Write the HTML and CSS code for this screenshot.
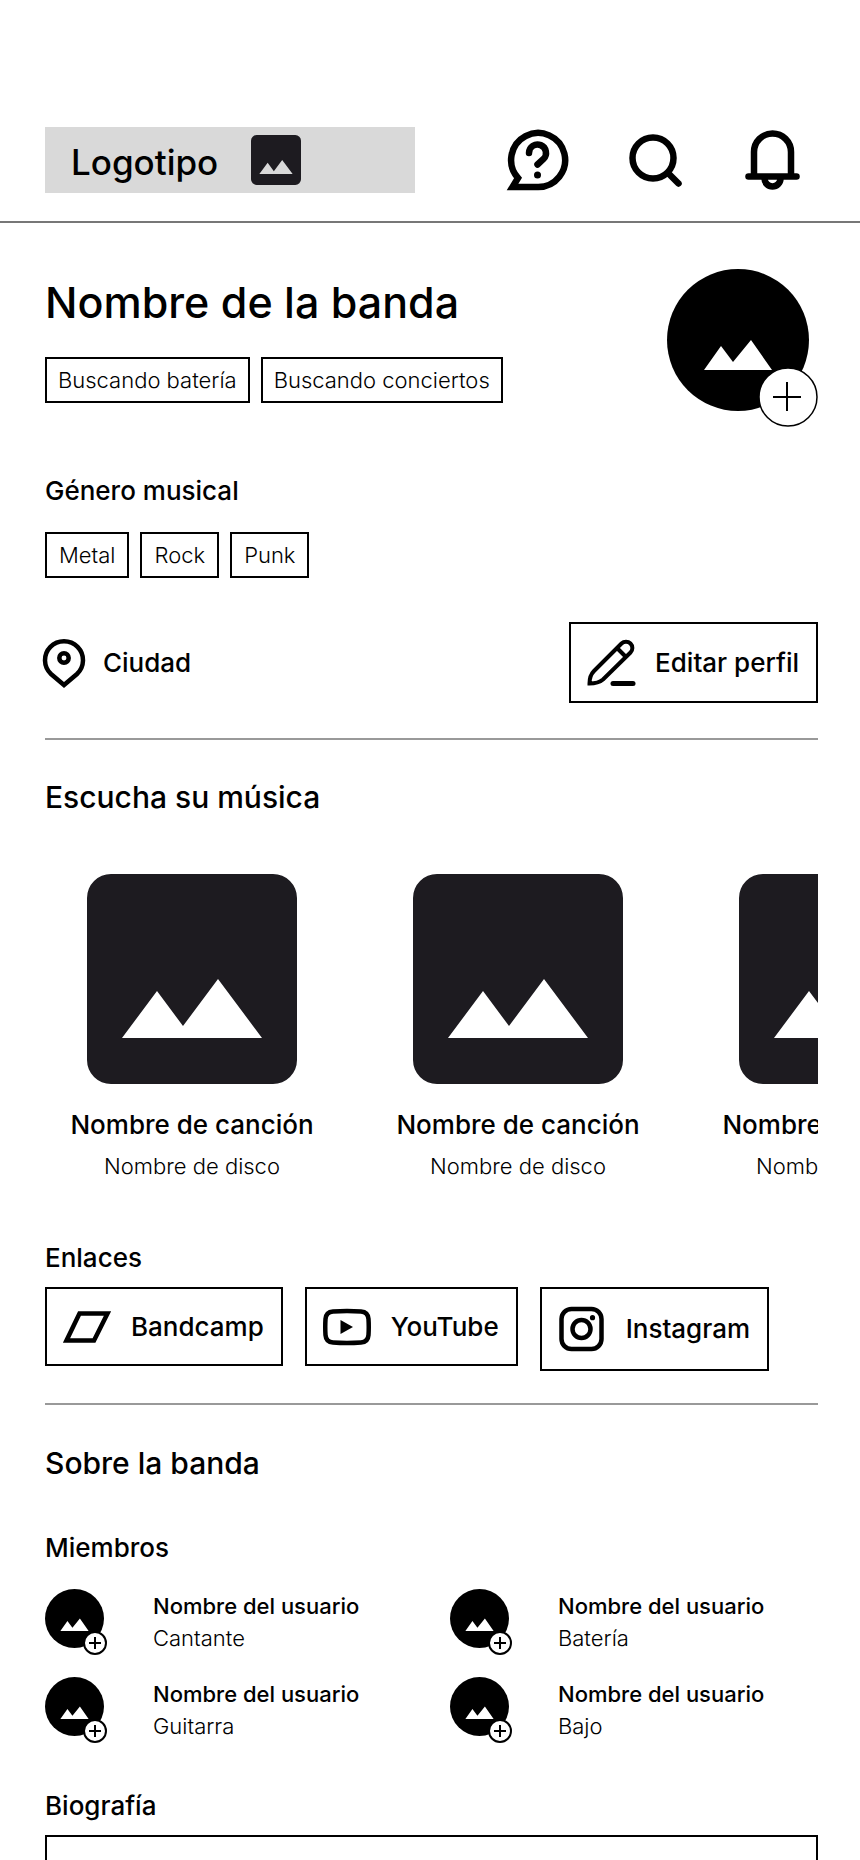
FILE: index.html
```html
<!DOCTYPE html>
<html lang="es">
<head>
    <meta charset="UTF-8">
    <meta name="viewport" content="width=device-width, initial-scale=1.0">
    <title>Nombre de la banda</title>
    <link rel="stylesheet" href="styles.css">
</head>
<body>
    <!-- Dibujos que se repiten -->
    <svg class="sprite" aria-hidden="true">
        <symbol id="cover" viewBox="0 0 210 210">
            <path fill-rule="evenodd" d="M24 0H186A24 24 0 0 1 210 24V186A24 24 0 0 1 186 210H24A24 24 0 0 1 0 186V24A24 24 0 0 1 24 0ZM35 164H175L131 105L96 152L70 117Z"/>
        </symbol>
        <symbol id="photo" viewBox="0 0 142 142">
            <circle cx="71" cy="71" r="71"/>
            <path fill="#fff" d="M37 101H105L84 71L66 93L54 77Z"/>
        </symbol>
    </svg>

    <header class="header">
        <a class="logo" href="#">
            <span>Logotipo</span>
            <svg class="logo-image"><use href="#cover"/></svg>
        </a>
        <nav class="header-actions">
            <button class="icon-button" aria-label="Ayuda">
                <svg viewBox="0 0 66 66" fill="none" stroke="#000" stroke-width="6.500">
                    <path d="M34 60A27 27 0 1 0 14 51L8.500 60Z"/>
                    <path stroke-linecap="round" d="M25 26a8.500 8.500 0 1 1 14.500 6l-6 5.500"/>
                    <circle cx="33.500" cy="48" r="3.500" fill="#000" stroke="none"/>
                </svg>
            </button>
            <button class="icon-button" aria-label="Buscar">
                <svg viewBox="0 0 66 66" fill="none" stroke="#000" stroke-width="6.500">
                    <circle cx="31" cy="31" r="20.500"/>
                    <path stroke-linecap="round" d="M46 46L56.500 56.500"/>
                </svg>
            </button>
            <button class="icon-button" aria-label="Notificaciones">
                <svg viewBox="0 0 66 66" fill="none" stroke="#000" stroke-width="6.500">
                    <path d="M14 49V25a18.500 18.500 0 0 1 37 0V49"/>
                    <path stroke-linecap="round" d="M8.500 49.500H56.500"/>
                    <path d="M24.500 51.500a8 8 0 0 0 16 0"/>
                </svg>
            </button>
        </nav>
    </header>

    <main class="content">
        <section class="profile">
            <div class="profile-top">
                <div class="profile-info">
                    <h1>Nombre de la banda</h1>
                    <ul class="tags">
                        <li>Buscando batería</li>
                        <li>Buscando conciertos</li>
                    </ul>
                </div>
                <div class="avatar avatar-big">
                    <svg class="avatar-photo"><use href="#photo"/></svg>
                    <button class="badge" aria-label="Cambiar foto">
                        <svg viewBox="0 0 60 60" stroke="#000"><circle cx="30" cy="30" r="29" fill="#fff" stroke-width="1.500"/><path stroke-width="2" d="M29 15V44M15 30H43"/></svg>
                    </button>
                </div>
            </div>
            <h3>Género musical</h3>
            <ul class="tags genres">
                <li>Metal</li>
                <li>Rock</li>
                <li>Punk</li>
            </ul>
            <div class="profile-bottom">
                <div class="city">
                    <svg class="pin" viewBox="2 0 40 50" fill="none" stroke="#000" stroke-width="4.500">
                        <path d="M21 47L8 36A19 19 0 1 1 34 36Z"/>
                        <circle cx="21" cy="20" r="4.700"/>
                    </svg>
                    <span>Ciudad</span>
                </div>
                <button class="box-button">
                    <svg class="edit-icon" viewBox="0 1 50 47" fill="none" stroke="#000" stroke-width="4">
                        <path d="M2.500 45.500C2.500 39.500 3.500 36.500 7 33L34.500 5.500A6.300 6.300 0 0 1 43.500 14.500L16 41.500C12.500 44.500 9 45.500 2.500 45.500Z"/>
                        <path d="M30 10L39 19"/>
                        <path stroke-width="5" stroke-linecap="round" d="M26 45.500H46"/>
                    </svg>
                    <span>Editar perfil</span>
                </button>
            </div>
        </section>

        <section class="music">
            <h2>Escucha su música</h2>
            <div class="songs">
                <article class="song">
                    <svg class="song-cover"><use href="#cover"/></svg>
                    <div class="song-name">Nombre de canción</div>
                    <div class="song-album">Nombre de disco</div>
                </article>
                <article class="song">
                    <svg class="song-cover"><use href="#cover"/></svg>
                    <div class="song-name">Nombre de canción</div>
                    <div class="song-album">Nombre de disco</div>
                </article>
                <article class="song">
                    <svg class="song-cover"><use href="#cover"/></svg>
                    <div class="song-name">Nombre de canción</div>
                    <div class="song-album">Nombre de disco</div>
                </article>
            </div>
            <h3>Enlaces</h3>
            <div class="links">
                <a class="box-button" href="#">
                    <svg class="link-icon" viewBox="0 2 50 45" fill="none" stroke="#000" stroke-width="4.500">
                        <path d="M16.500 11.500H44.500L31 38.500H3.500Z"/>
                    </svg>
                    <span>Bandcamp</span>
                </a>
                <a class="box-button" href="#">
                    <svg class="link-icon" viewBox="0 2 50 45" fill="none" stroke="#000" stroke-width="4.500">
                        <path d="M10 9.500Q24 8.500 38 9.500Q45 10 45.500 17Q46 25 45.500 33Q45 40 38 40.500Q24 41.500 10 40.500Q3 40 2.500 33Q2 25 2.500 17Q3 10 10 9.500Z"/>
                        <path fill="#000" stroke="none" d="M17.500 18L30 25L17.500 32Z"/>
                    </svg>
                    <span>YouTube</span>
                </a>
                <a class="box-button" href="#">
                    <svg class="instagram-icon" viewBox="0 0 50 50" fill="none" stroke="#000" stroke-width="4.500">
                        <rect x="3.500" y="5" width="40" height="40" rx="10"/>
                        <circle cx="23.500" cy="25" r="9"/>
                        <circle cx="34.500" cy="13.700" r="2.600" fill="#000" stroke="none"/>
                    </svg>
                    <span>Instagram</span>
                </a>
            </div>
        </section>

        <section class="about">
            <h2>Sobre la banda</h2>
            <h3>Miembros</h3>
            <div class="members">
                <div class="member">
                    <div class="avatar">
                        <svg class="avatar-photo"><use href="#photo"/></svg>
                        <button class="badge" aria-label="Cambiar foto">
                            <svg viewBox="0 0 24 24" stroke="#000"><circle cx="12" cy="12" r="11" fill="#fff" stroke-width="2"/><path stroke-width="2" d="M12 6V18M6 12H18"/></svg>
                        </button>
                    </div>
                    <div>
                        <div class="member-name">Nombre del usuario</div>
                        <div class="member-role">Cantante</div>
                    </div>
                </div>
                <div class="member">
                    <div class="avatar">
                        <svg class="avatar-photo"><use href="#photo"/></svg>
                        <button class="badge" aria-label="Cambiar foto">
                            <svg viewBox="0 0 24 24" stroke="#000"><circle cx="12" cy="12" r="11" fill="#fff" stroke-width="2"/><path stroke-width="2" d="M12 6V18M6 12H18"/></svg>
                        </button>
                    </div>
                    <div>
                        <div class="member-name">Nombre del usuario</div>
                        <div class="member-role">Batería</div>
                    </div>
                </div>
                <div class="member">
                    <div class="avatar">
                        <svg class="avatar-photo"><use href="#photo"/></svg>
                        <button class="badge" aria-label="Cambiar foto">
                            <svg viewBox="0 0 24 24" stroke="#000"><circle cx="12" cy="12" r="11" fill="#fff" stroke-width="2"/><path stroke-width="2" d="M12 6V18M6 12H18"/></svg>
                        </button>
                    </div>
                    <div>
                        <div class="member-name">Nombre del usuario</div>
                        <div class="member-role">Guitarra</div>
                    </div>
                </div>
                <div class="member">
                    <div class="avatar">
                        <svg class="avatar-photo"><use href="#photo"/></svg>
                        <button class="badge" aria-label="Cambiar foto">
                            <svg viewBox="0 0 24 24" stroke="#000"><circle cx="12" cy="12" r="11" fill="#fff" stroke-width="2"/><path stroke-width="2" d="M12 6V18M6 12H18"/></svg>
                        </button>
                    </div>
                    <div>
                        <div class="member-name">Nombre del usuario</div>
                        <div class="member-role">Bajo</div>
                    </div>
                </div>
            </div>
            <label class="bio-label" for="bio">Biografía</label>
            <textarea class="bio" id="bio" rows="6"></textarea>
        </section>
    </main>
</body>
</html>
```
FILE: styles.css
```css
* {
    box-sizing: border-box;
}
body {
    font-family: Inter, "Liberation Sans", sans-serif;
    font-size: 26px;
    font-weight: 500;
    line-height: 32px;
    color: #000;
    background: #fff;
    margin: 0;
}
h1, h2, h3, ul {
    margin: 0;
    padding: 0;
    font-weight: 500;
}
h1 {
    font-size: 43px;
    line-height: 54px;
}
h2 {
    font-size: 30px;
    line-height: 38px;
}
h3 {
    font-size: 26px;
    line-height: 32px;
}
svg {
    display: block;
    flex: none;
}
button {
    font: inherit;
    color: inherit;
    background: none;
    border: 0;
    padding: 0;
    cursor: pointer;
}
a {
    color: inherit;
    text-decoration: none;
}
.sprite {
    display: none;
}

/* Cabecera */
.header {
    display: flex;
    justify-content: space-between;
    padding: 127px 54px 28px 45px;
    border-bottom: 2px solid #777;
}
.logo {
    display: flex;
    align-items: center;
    gap: 33px;
    width: 370px;
    height: 66px;
    padding-left: 26px;
    background: #d9d9d9;
    font-size: 35px;
    line-height: 42px;
}
.logo span {
    padding-top: 4px;
}
.logo-image {
    width: 50px;
    height: 50px;
    fill: #1d1b20;
}
.header-actions {
    display: flex;
    gap: 52px;
}
.icon-button svg {
    width: 66px;
    height: 66px;
}

.content {
    padding: 0 42px 0 45px;
}

/* Perfil */
.profile {
    padding: 46px 0 35px;
    border-bottom: 2px solid #999;
}
.profile-top {
    display: flex;
    justify-content: space-between;
    margin-bottom: 48px;
}
.profile-info {
    padding-top: 6px;
}
.profile-info .tags {
    margin-top: 28px;
}
.tags {
    display: flex;
    gap: 11px;
    list-style: none;
}
.tags li {
    border: 2px solid #000;
    padding: 7px 11px;
    font-size: 22px;
    font-weight: 300;
    line-height: 28px;
}
.genres li {
    padding: 7px 12px;
}
.profile h3 {
    margin-bottom: 25px;
}
.profile-bottom {
    display: flex;
    justify-content: space-between;
    align-items: center;
    margin-top: 44px;
}
.city {
    display: flex;
    align-items: center;
    gap: 18px;
}
.pin {
    width: 40px;
    height: 50px;
    overflow: visible;
}
.box-button {
    display: flex;
    align-items: center;
    gap: 18px;
    border: 2px solid #000;
    padding: 15px 17px 15px 16px;
}
.edit-icon {
    width: 50px;
    height: 47px;
}

/* Fotos redondas */
.avatar {
    position: relative;
    flex: none;
    width: 62px;
    height: 66px;
}
.avatar-photo {
    width: 59px;
    height: 59px;
}
.badge {
    position: absolute;
    right: 0;
    bottom: 0;
    width: 24px;
    height: 24px;
}
.avatar-big {
    width: 151px;
    height: 158px;
}
.avatar-big .avatar-photo {
    width: 142px;
    height: 142px;
}
.avatar-big .badge {
    width: 60px;
    height: 60px;
}

/* Música */
.music {
    padding: 38px 0 32px;
    border-bottom: 2px solid #999;
}
.songs {
    display: flex;
    gap: 32px;
    margin: 58px 0 62px;
    overflow-x: auto;
    scrollbar-width: none;
}
.song {
    flex: none;
    width: 294px;
    text-align: center;
}
.song-cover {
    width: 210px;
    height: 210px;
    margin: 0 auto 25px;
    fill: #1d1b20;
}
.song-album {
    margin-top: 11px;
    font-size: 22px;
    font-weight: 300;
    line-height: 28px;
}
.links {
    display: flex;
    align-items: flex-start;
    gap: 22px;
    margin-top: 13px;
}
.link-icon {
    width: 50px;
    height: 45px;
}
.instagram-icon {
    width: 50px;
    height: 50px;
}

/* Sobre la banda */
.about {
    padding: 39px 0 45px;
}
.about h3 {
    margin: 50px 0 25px;
}
.members {
    display: grid;
    grid-template-columns: 1fr 1fr;
    gap: 22px 37px;
}
.member {
    display: flex;
    align-items: center;
    gap: 46px;
    font-size: 22px;
}
.member-role {
    font-weight: 300;
}
.bio-label {
    display: block;
    margin: 47px 0 13px;
}
.bio {
    display: block;
    width: 100%;
    border: 2px solid #000;
    border-radius: 0;
    padding: 16px;
    font: inherit;
    resize: none;
}
```
